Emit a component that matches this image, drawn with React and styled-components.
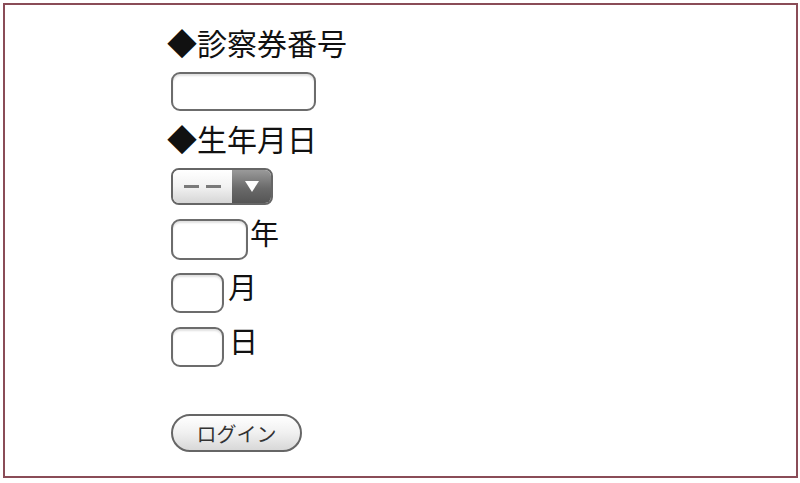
import React from 'react';
import styled, { createGlobalStyle } from 'styled-components';

const GlobalStyle = createGlobalStyle`
  html, body {
    margin: 0;
    padding: 0;
    background: #fff;
  }
  body {
    font-family: "Liberation Serif", "Noto Sans CJK JP", serif;
  }
`;

const Frame = styled.div`
  box-sizing: border-box;
  margin: 3px;
  width: 795px;
  height: 475px;
  border: 2px solid #8a4c57;
  padding: 24px 0 0 162px;
  display: flex;
  flex-direction: column;
  align-items: flex-start;
`;

const Label = styled.div`
  height: 32px;
  line-height: 32px;
  font-size: 30px;
  color: #111;
  font-family: "Liberation Serif", "Noto Sans CJK JP", serif;
  margin-top: ${(p) => p.$mt || 0}px;
  white-space: nowrap;
`;

const TextBox = styled.input`
  box-sizing: border-box;
  width: ${(p) => p.$w}px;
  height: ${(p) => p.$h || 40}px;
  border: 2px solid #6c6c6c;
  border-radius: 9px;
  background: #fff;
  box-shadow: inset 0 2px 2px rgba(0, 0, 0, 0.12);
  outline: none;
  padding: 0 6px;
  margin: 0;
  font-size: 16px;
`;

const Field = styled.div`
  margin-top: ${(p) => p.$mt || 0}px;
  margin-left: 4px;
  display: flex;
  align-items: center;
`;

const Unit = styled.span`
  font-size: 29px;
  line-height: 32px;
  color: #111;
  margin-left: ${(p) => p.$ml || 4}px;
  margin-top: -9px;
  font-family: "Liberation Serif", "Noto Sans CJK JP", serif;
`;

const SelectBox = styled.div`
  box-sizing: border-box;
  margin-top: 11px;
  margin-left: 4px;
  width: 102px;
  height: 37px;
  border: 2px solid #666;
  border-radius: 8px;
  overflow: hidden;
  display: flex;
`;

const SelectValue = styled.div`
  flex: 1;
  background: linear-gradient(#ffffff, #f2f2f2 50%, #d6d6d6);
  display: flex;
  align-items: center;
  gap: 7px;
  padding-left: 11px;
`;

const Dash = styled.span`
  width: 15px;
  height: 3px;
  background: #7a7a7a;
`;

const SelectArrow = styled.div`
  width: 39px;
  background: linear-gradient(#9a9a9a, #6a6a6a 55%, #555);
  display: flex;
  align-items: center;
  justify-content: center;
`;

const LoginButton = styled.button`
  box-sizing: border-box;
  margin-top: 47px;
  margin-left: 4px;
  width: 131px;
  height: 38px;
  border: 2px solid #666;
  border-radius: 19px;
  background: linear-gradient(#ffffff, #f0f0f0 50%, #d8d8d8);
  font-family: "Noto Sans CJK JP", "Liberation Sans", sans-serif;
  font-size: 20px;
  color: #333;
  padding: 0;
  cursor: pointer;
`;

export default function App() {
  return (
    <>
      <GlobalStyle />
      <Frame>
        <Label>◆診察券番号</Label>
        <Field $mt={11}>
          <TextBox $w={145} $h={39} />
        </Field>
        <Label $mt={14}>◆生年月日</Label>
        <SelectBox>
          <SelectValue>
            <Dash />
            <Dash />
          </SelectValue>
          <SelectArrow>
            <svg width="14" height="11" viewBox="0 0 14 11">
              <polygon points="0,0 14,0 7,11" fill="#fff" />
            </svg>
          </SelectArrow>
        </SelectBox>
        <Field $mt={14}>
          <TextBox $w={77} $h={41} />
          <Unit $ml={2}>年</Unit>
        </Field>
        <Field $mt={13}>
          <TextBox $w={53} $h={40} />
          <Unit $ml={4}>月</Unit>
        </Field>
        <Field $mt={14}>
          <TextBox $w={53} $h={40} />
          <Unit $ml={5}>日</Unit>
        </Field>
        <LoginButton>ログイン</LoginButton>
      </Frame>
    </>
  );
}
